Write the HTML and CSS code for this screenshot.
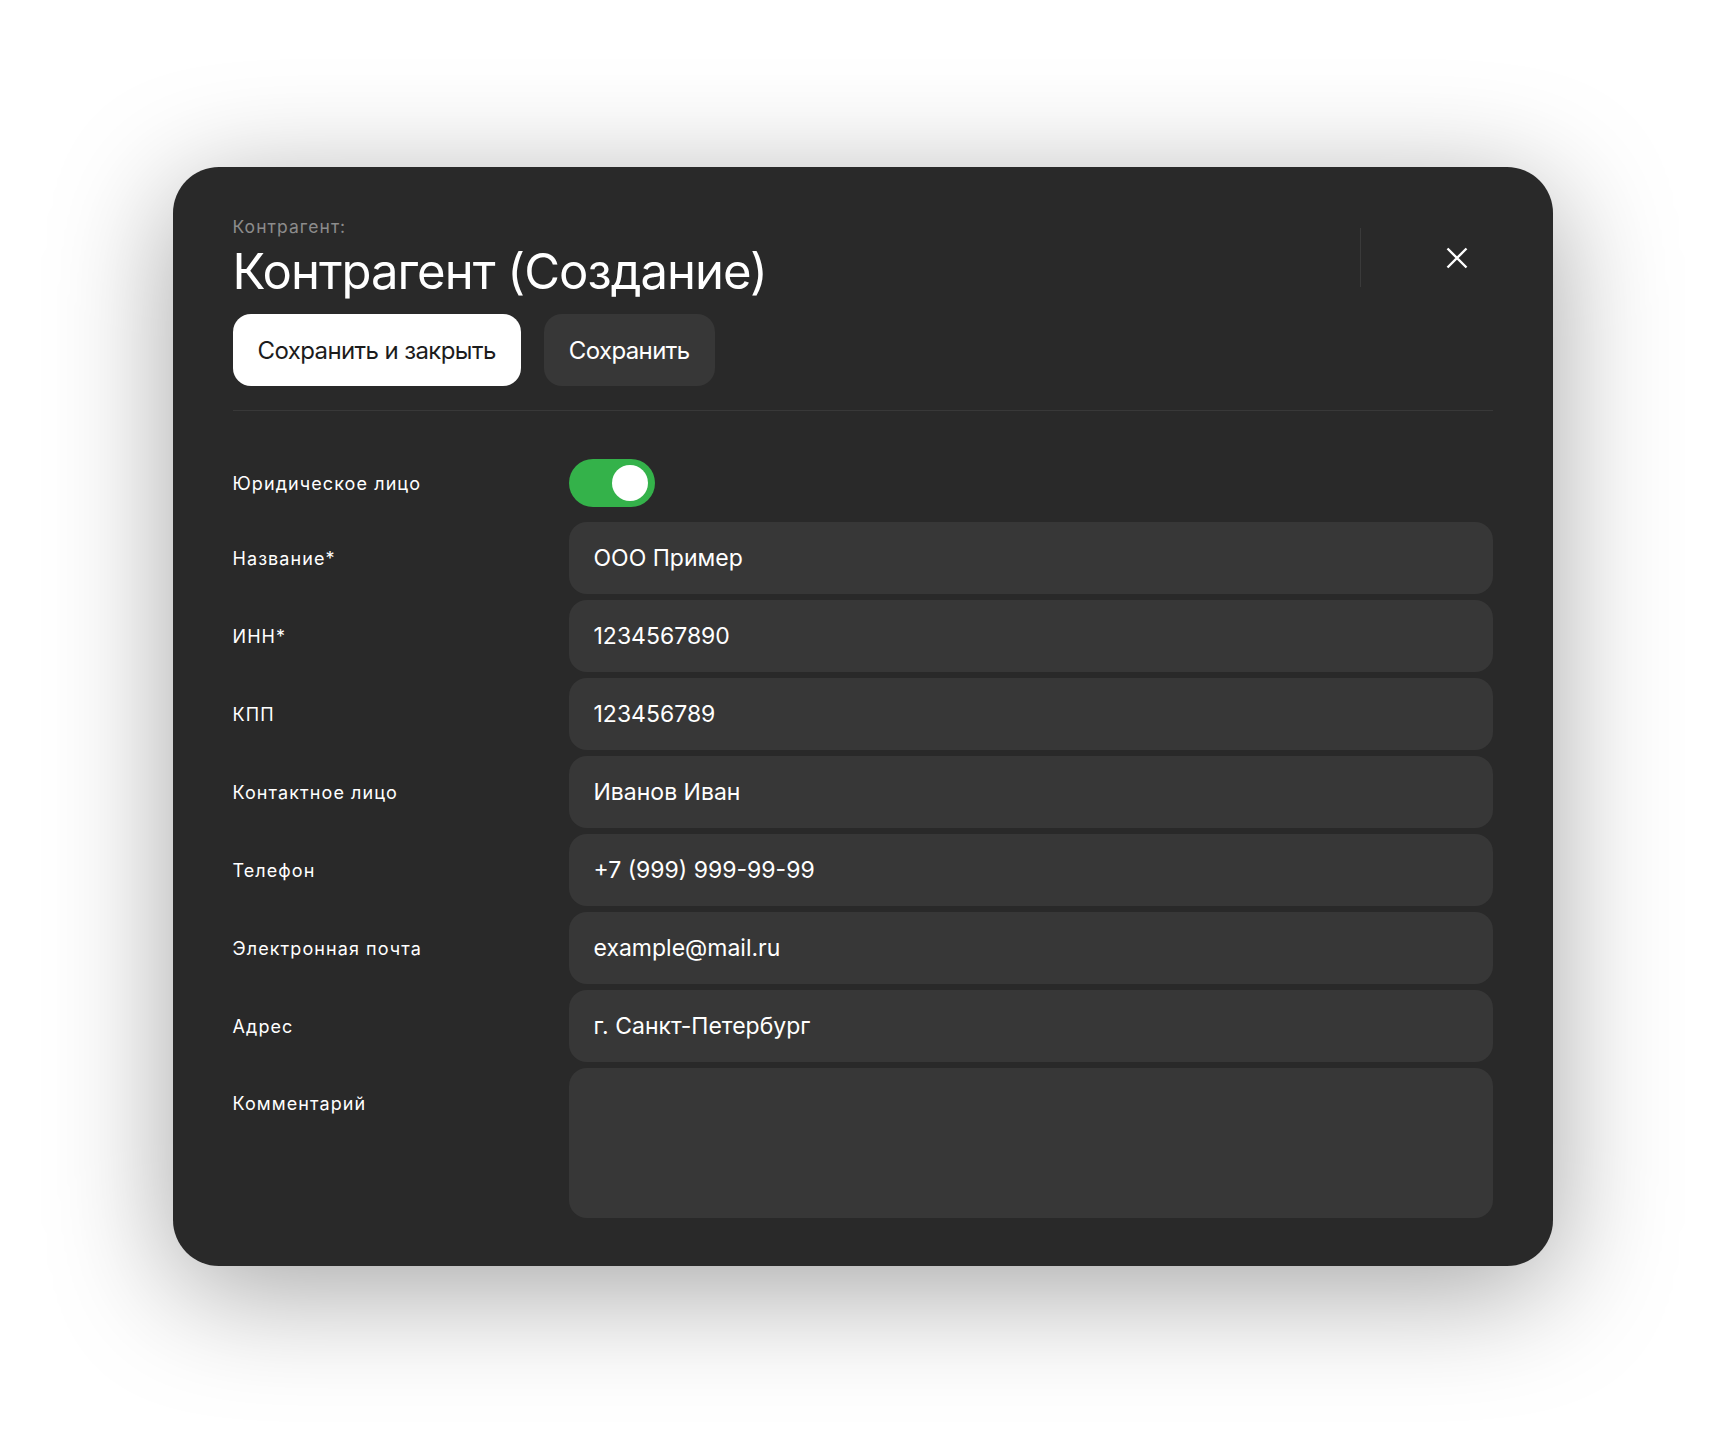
FILE: index.html
```html
<!DOCTYPE html>
<html lang="ru">
<head>
<meta charset="utf-8">
<title>Контрагент (Создание)</title>
<link rel="stylesheet" href="styles.css">
</head>
<body>
<div class="card">
  <div class="header">
    <div class="titles">
      <div class="eyebrow">Контрагент:</div>
      <h1 class="title">Контрагент (Создание)</h1>
      <div class="actions">
        <button class="btn btn-primary">Сохранить и закрыть</button>
        <button class="btn btn-secondary">Сохранить</button>
      </div>
    </div>
    <div class="close-area">
      <button class="close" aria-label="Закрыть">
        <svg width="22" height="22" viewBox="0 0 22 22"><path d="M1.5 1.5L20.5 20.5M20.5 1.5L1.5 20.5" stroke="#fff" stroke-width="2.4" stroke-linecap="butt" fill="none"/></svg>
      </button>
    </div>
  </div>
  <div class="separator"></div>
  <form class="form">
    <div class="row row-toggle">
      <label class="label">Юридическое лицо</label>
      <div class="toggle"><span class="knob"></span></div>
    </div>
    <div class="row">
      <label class="label">Название*</label>
      <input class="field" value="ООО Пример">
    </div>
    <div class="row">
      <label class="label">ИНН*</label>
      <input class="field" value="1234567890">
    </div>
    <div class="row">
      <label class="label">КПП</label>
      <input class="field" value="123456789">
    </div>
    <div class="row">
      <label class="label">Контактное лицо</label>
      <input class="field" value="Иванов Иван">
    </div>
    <div class="row">
      <label class="label">Телефон</label>
      <input class="field" value="+7 (999) 999-99-99">
    </div>
    <div class="row">
      <label class="label">Электронная почта</label>
      <input class="field" value="example@mail.ru">
    </div>
    <div class="row">
      <label class="label">Адрес</label>
      <input class="field" value="г. Санкт-Петербург">
    </div>
    <div class="row row-top">
      <label class="label">Комментарий</label>
      <textarea class="field area"></textarea>
    </div>
  </form>
</div>
</body>
</html>
```

FILE: styles.css
```css
html, body {
  margin: 0;
  background: #ffffff;
}
body {
  box-sizing: border-box;
  min-height: 1445px;
  padding-top: 167px;
  font-family: Inter, "Noto Sans", sans-serif;
  color: #ffffff;
}
.card {
  box-sizing: border-box;
  width: 1380px;
  margin: 0 auto;
  padding: 0 60px 48px 60px;
  background: #292929;
  border-radius: 46px;
  box-shadow: 0 24px 120px rgba(0, 0, 0, 0.36);
}
.header {
  display: flex;
  align-items: flex-start;
}
.titles {
  flex: 1;
  padding-top: 50px;
}
.eyebrow {
  font-size: 17.5px;
  line-height: 20px;
  letter-spacing: 0.06em;
  color: #8c8c8c;
}
.title {
  margin: 7px 0 0 0;
  font-size: 49px;
  line-height: 56px;
  font-weight: 400;
  letter-spacing: -0.02em;
  color: #ffffff;
}
.actions {
  display: flex;
  gap: 23px;
  margin-top: 14px;
}
.btn {
  height: 72px;
  padding: 0 25px;
  border: none;
  border-radius: 18px;
  font-family: Inter, "Noto Sans", sans-serif;
  font-size: 24px;
  font-weight: 400;
  letter-spacing: -0.025em;
  cursor: pointer;
}
.btn-primary {
  background: #ffffff;
  color: #1c1c1c;
}
.btn-secondary {
  background: #373737;
  color: #ffffff;
}
.close-area {
  width: 192px;
  height: 59px;
  margin-top: 61px;
  margin-right: -60px;
  border-left: 1px solid #3a3a3a;
  display: flex;
  align-items: center;
  justify-content: center;
}
.close {
  width: 40px;
  height: 40px;
  padding: 0;
  border: none;
  background: transparent;
  display: flex;
  align-items: center;
  justify-content: center;
  cursor: pointer;
}
.separator {
  height: 1px;
  margin-top: 24px;
  background: #383838;
}
.form {
  display: flex;
  flex-direction: column;
  gap: 6px;
  margin: 48px 0 0 0;
}
.row {
  display: flex;
  align-items: center;
}
.row-toggle {
  margin-bottom: 9px;
}
.row-top {
  align-items: flex-start;
}
.label {
  width: 336px;
  flex: none;
  font-size: 18px;
  font-weight: 400;
  letter-spacing: 0.06em;
  color: #ffffff;
}
.row-top .label {
  line-height: 72px;
}
.toggle {
  box-sizing: border-box;
  width: 86px;
  height: 48px;
  padding: 0 7px;
  border-radius: 24px;
  background: #34b24a;
  display: flex;
  align-items: center;
  justify-content: flex-end;
}
.knob {
  width: 36px;
  height: 36px;
  border-radius: 50%;
  background: #ffffff;
}
.field {
  box-sizing: border-box;
  flex: 1;
  min-width: 0;
  height: 72px;
  padding: 0 25px;
  border: none;
  border-radius: 18px;
  background: #373737;
  color: #ffffff;
  font-family: Inter, "Noto Sans", sans-serif;
  font-size: 23px;
  font-weight: 400;
  outline: none;
}
.area {
  height: 150px;
  padding-top: 22px;
  resize: none;
}
```
